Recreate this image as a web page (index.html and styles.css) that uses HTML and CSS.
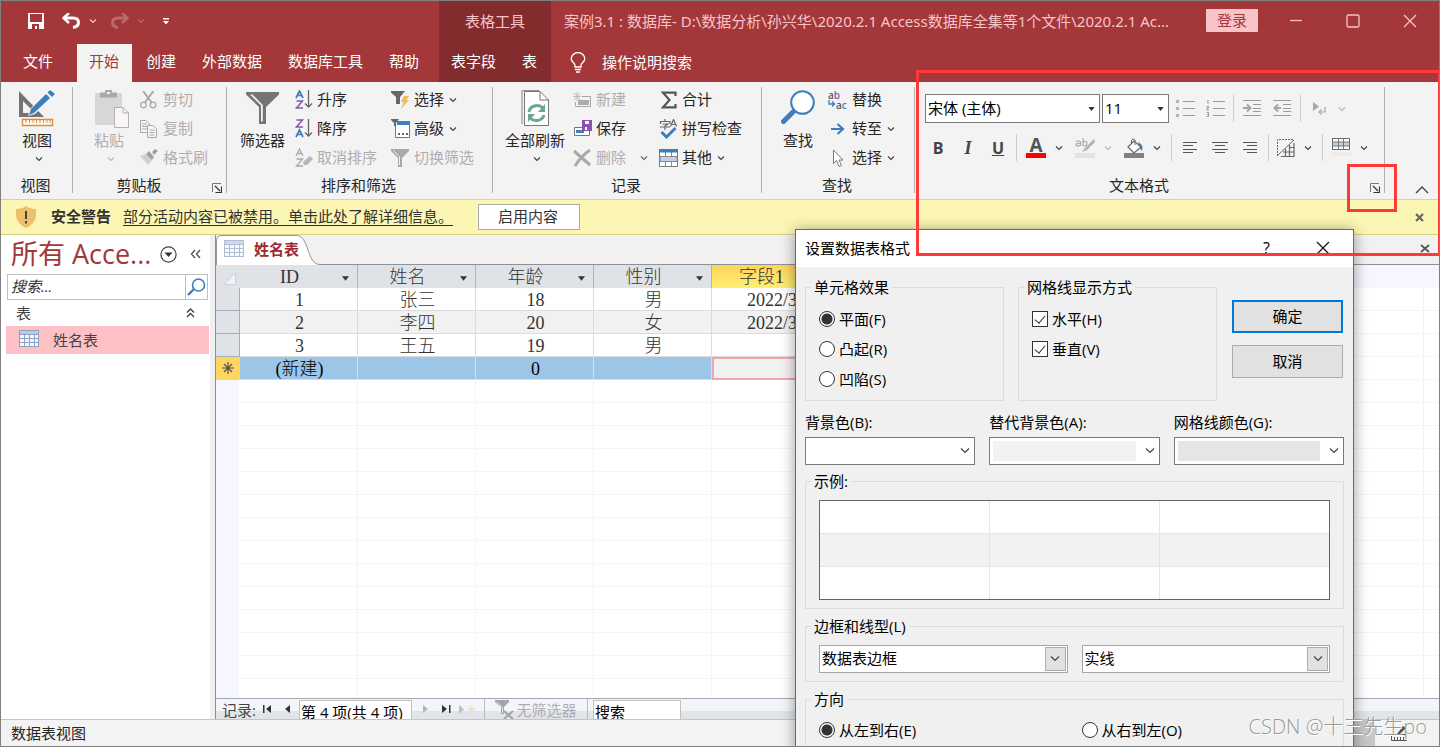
FILE: index.html
```html
<!DOCTYPE html>
<html lang="zh-CN">
<head>
<meta charset="utf-8">
<title>案例3.1 : 数据库</title>
<link rel="stylesheet" href="styles.css">
</head>
<body>
<svg class="defs" aria-hidden="true">
  <symbol id="chev" viewBox="0 0 8 6"><path d="M1 1.500L4 4.500L7 1.500" fill="none" stroke="currentColor" stroke-width="1.200"/></symbol>
  <symbol id="launch" viewBox="0 0 10 10"><path d="M0.500 9V0.500H9" fill="none" stroke="#777"/><path d="M3 3L8 8M9.500 3.500V9.500H3.500" fill="none" stroke="#333" stroke-width="1.200"/></symbol>
  <symbol id="down" viewBox="0 0 10 8"><path d="M1 1.500L5 5.500L9 1.500" fill="none" stroke="#444" stroke-width="1.200"/></symbol>
  <symbol id="sheet" viewBox="0 0 20 17"><path d="M0 0H20V17H0Z" fill="#8ea2c4"/><path d="M1 1H19V4H1Z" fill="#b9cbe6"/><path d="M1 5H5V8H1ZM6 5H10V8H6ZM11 5H15V8H11ZM16 5H19V8H16ZM1 9H5V12H1ZM6 9H10V12H6ZM11 9H15V12H11ZM16 9H19V12H16ZM1 13H5V16H1ZM6 13H10V16H6ZM11 13H15V16H11ZM16 13H19V16H16Z" fill="#f3f7fd"/></symbol>
  <symbol id="tri" viewBox="0 0 8 5"><path d="M0 0H8L4 5Z" fill="#333"/></symbol>
</svg>

<div class="app">
  <header class="head">
    <div class="head-left">
      <div class="qat">
        <button class="save" aria-label="保存"><svg width="16" height="16"><path fill-rule="evenodd" fill="#fff" d="M0 0H16V16H0ZM2 1V9H14V1ZM4 11V16H7V13H9V16H11V11Z"/></svg></button>
        <button class="undo" aria-label="撤消"><svg width="19" height="16"><path d="M2 5H11C15 5 16.500 7 16.500 9.500S14.500 14 11 14.500" fill="none" stroke="#fff" stroke-width="3"/><path d="M7 0L1.500 5L7 10" fill="none" stroke="#fff" stroke-width="2.500"/></svg><svg class="c pinkc" width="8" height="6"><use href="#chev"/></svg></button>
        <button class="redo" aria-label="恢复"><svg width="19" height="16"><path d="M17 5H8C4 5 2.500 7 2.500 9.500S4.500 14 8 14.500" fill="none" stroke="#bd6a6d" stroke-width="3"/><path d="M12 0L17.500 5L12 10" fill="none" stroke="#bd6a6d" stroke-width="2.500"/></svg><svg class="c dimc" width="8" height="6"><use href="#chev"/></svg></button>
        <button class="cust" aria-label="自定义"><svg width="6" height="7"><path d="M0 0H6V1.400H0ZM0 3H6L3 6.500Z" fill="#fff"/></svg></button>
      </div>
      <nav class="tabs">
        <button class="tab file">文件</button><button class="tab active">开始</button><button class="tab">创建</button><button class="tab">外部数据</button><button class="tab">数据库工具</button><button class="tab">帮助</button>
      </nav>
    </div>
    <div class="head-ctx">
      <div class="ctx-title">表格工具</div>
      <nav class="ctx-tabs"><button>表字段</button><button>表</button></nav>
    </div>
    <div class="head-right">
      <div class="titlebar">
        <div class="title">案例3.1 : 数据库- D:\数据分析\孙兴华\2020.2.1 Access数据库全集等1个文件\2020.2.1 Ac...</div>
        <button class="login">登录</button>
        <button class="win" aria-label="最小化"><svg width="14" height="14"><path d="M1 6.500H13" stroke="#f8c4c8" stroke-width="1.300"/></svg></button>
        <button class="win" aria-label="最大化"><svg width="14" height="14"><rect x="1" y="1" width="12" height="12" rx="1.500" fill="none" stroke="#f8c4c8" stroke-width="1.300"/></svg></button>
        <button class="win" aria-label="关闭"><svg width="14" height="14"><path d="M1 1L13 13M13 1L1 13" stroke="#f8c4c8" stroke-width="1.300"/></svg></button>
      </div>
      <button class="tell"><svg width="16" height="21" fill="none" stroke="#fff" stroke-width="1.400"><path d="M5 15V13.500C5 11 1.200 10 1.200 6.800A6.800 6.200 0 0 1 14.800 6.800C14.800 10 11 11 11 13.500V15ZM5 17.500H11M6 20H10"/></svg>操作说明搜索</button>
    </div>
  </header>

  <div class="ribbon">
    <section class="group g1">
      <div class="gbody">
        <button class="big"><svg width="36" height="36"><path fill-rule="evenodd" fill="#737373" d="M0 1L25 27H0ZM4 11V23H10L13 20Z"/><path d="M9 26L11 19L29 1L35 6L16 24Z" fill="#f3f3f3"/><path d="M10 25L12 19L27 4L31 8L15 23Z" fill="#3f7ebd"/><path d="M28.500 2.500L31 0L36 4L33 7Z" fill="#3f7ebd"/><path d="M3.500 29.500H33.500V35.500H3.500Z" fill="#fff" stroke="#e08a3c" stroke-width="1.400"/><path d="M7 30V33M10.500 30V33M14 30V33M17.500 30V33M21 30V33M24.500 30V33M28 30V33M31 30V33" stroke="#e08a3c"/></svg><span>视图</span><svg class="c" width="8" height="6"><use href="#chev"/></svg></button>
      </div>
      <div class="glabel"><span>视图</span></div>
    </section>
    <section class="group g2">
      <div class="gbody">
        <button class="big" disabled><svg width="34" height="38"><path d="M0 3H27V35H0Z" fill="#d9d6d9"/><path d="M5 2.500H10V0H17V2.500H22V7.500H5Z" fill="#a9a9a9"/><path d="M12 2H15V4H12Z" fill="#f3f3f3"/><path d="M19.500 17.500H28L33.500 23V37.500H19.500Z" fill="#f8f5f8" stroke="#b3afb3"/><path d="M28 17.500V23H33.500" fill="none" stroke="#b3afb3"/></svg><span>粘贴</span><svg class="c" width="8" height="6"><use href="#chev"/></svg></button>
        <div class="col">
          <button class="small" disabled><i><svg width="17" height="18" fill="none" stroke="#a9a9a9"><path d="M3 0L12 12M13.500 0L4.500 12" stroke-width="2"/><circle cx="3.500" cy="14" r="2.800" stroke-width="1.300"/><circle cx="13" cy="14" r="2.800" stroke-width="1.300"/></svg></i><span>剪切</span></button>
          <button class="small" disabled><i><svg width="18" height="18" fill="#f6f4f6" stroke="#a9a9a9"><path d="M0.500 0.500H6L9.500 4V12.500H0.500ZM2 4H7M2 6.500H7M2 9H7"/><path d="M7.500 5.500H13L16.500 9V17.500H7.500ZM9.500 10H14.500M9.500 12.500H14.500M9.500 15H14.500"/></svg></i><span>复制</span></button>
          <button class="small" disabled><i><svg width="18" height="17"><path d="M0 7L6 5L12 11L8 16Z" fill="#d2ced2"/><path d="M6 5L9 2L14 8L12 11ZM12 3L15 0L18 2L14 6Z" fill="#a0a0a0"/></svg></i><span>格式刷</span></button>
        </div>
      </div>
      <div class="glabel"><span>剪贴板</span><button class="launcher" aria-label="剪贴板选项"><svg width="10" height="10"><use href="#launch"/></svg></button></div>
    </section>
    <section class="group g3">
      <div class="gbody">
        <button class="big"><svg width="33" height="32"><path d="M0 0H33V2.500L20 15V32H13V15L0 2.500Z" fill="#757575"/><path d="M4 2.500L15 13.500V29.500H16.800V13L6.500 2.500Z" fill="#f3f3f3"/></svg><span>筛选器</span></button>
        <div class="col sort">
          <button class="small"><i><svg width="18" height="19"><path d="M1 8L4.500 1L8 8M2.500 5.500H6.500" fill="none" stroke="#3f7ebd" stroke-width="1.700"/><path d="M1.500 11H7.500L1.500 18H8" fill="none" stroke="#8a54ad" stroke-width="1.500"/><path d="M13.500 0V17M10 13.500L13.500 17L17 13.500" fill="none" stroke="#666" stroke-width="1.300"/></svg></i><span>升序</span></button>
          <button class="small"><i><svg width="18" height="19"><path d="M1.500 1H7.500L1.500 8H8" fill="none" stroke="#8a54ad" stroke-width="1.500"/><path d="M1 18L4.500 11L8 18M2.500 15.500H6.500" fill="none" stroke="#3f7ebd" stroke-width="1.700"/><path d="M13.500 0V17M10 13.500L13.500 17L17 13.500" fill="none" stroke="#666" stroke-width="1.300"/></svg></i><span>降序</span></button>
          <button class="small" disabled><i><svg width="18" height="19"><path d="M1 8L4.500 1L8 8M2.500 5.500H6.500M1.500 11H7.500L1.500 18H8" fill="none" stroke="#a9a9a9" stroke-width="1.300"/><path d="M8 14L15 8L18 11L12 17H9Z" fill="#b5b5b5"/></svg></i><span>取消排序</span></button>
        </div>
        <div class="col">
          <button class="small"><i><svg width="19" height="18"><path d="M0 0H14L9 6V13H5V6L0 1.500Z" fill="#666"/><path d="M13 5H18L15.500 9H18L10 18L12.500 11H10Z" fill="#edbd62"/></svg></i><span>选择</span><svg class="c" width="8" height="6"><use href="#chev"/></svg></button>
          <button class="small"><i><svg width="20" height="19"><path d="M4.500 2.500H18.500V18.500H4.500Z" fill="#fff" stroke="#777"/><path d="M6 2H19V6H6Z" fill="#3f7ebd"/><path d="M0 0H8L5 4V7H3V4L0 1Z" fill="#666"/><path d="M7 14H9V16H7ZM11 14H13V16H11ZM15 14H17V16H15Z" fill="#666"/></svg></i><span>高级</span><svg class="c" width="8" height="6"><use href="#chev"/></svg></button>
          <button class="small" disabled><i><svg width="19" height="18"><path d="M0 0H18V2L11 9V18H7V9L0 2Z" fill="#a9a9a9"/><path d="M2.500 1.500L8.500 8V16" fill="none" stroke="#f3f3f3"/></svg></i><span>切换筛选</span></button>
        </div>
      </div>
      <div class="glabel"><span>排序和筛选</span></div>
    </section>
    <section class="group g4">
      <div class="gbody">
        <button class="big"><svg width="28" height="36"><path d="M1 34V0.600H18" fill="none" stroke="#888"/><path d="M3.500 1.500H19L27.500 10V35.500H3.500Z" fill="#fff" stroke="#777"/><path d="M19 1.500V10H27.500" fill="none" stroke="#777"/><g fill="none" stroke="#6aa792" stroke-width="3"><path d="M8 22A8 7 0 0 1 22 18M23 25A8 7 0 0 1 9 28"/></g><path d="M24 14V22H17ZM7 32V24H14Z" fill="#6aa792"/></svg><span>全部刷新</span><svg class="c" width="8" height="6"><use href="#chev"/></svg></button>
        <div class="col wide">
          <button class="small" disabled><i><svg width="18" height="16"><path d="M4 0V9M0 4.500H8M1 1L7 8M7 1L1 8" stroke="#bbb"/><path d="M9 4.500H17.500V14.500H2.500V10" fill="none" stroke="#a9a9a9"/><path d="M5 8H16V13H5Z" fill="#b0a9b0"/></svg></i><span>新建</span></button>
          <button class="small"><i><svg width="20" height="17"><path d="M1.500 7.500H16.500V15.500H1.500Z" fill="#fff" stroke="#777"/><path d="M3 10H11V13H3Z" fill="#3f7ebd"/><path d="M9 0H19V11H9Z" fill="#8a54ad"/><path d="M12 1H16V4H12ZM12 7H14V10H12Z" fill="#fff"/></svg></i><span>保存</span></button>
          <button class="small del" disabled><i><svg width="19" height="18"><path d="M1 2L17 16M17 1Q8 7 2 17" fill="none" stroke="#a9a9a9" stroke-width="3"/></svg></i><span>删除</span><svg class="c" width="8" height="6"><use href="#chev"/></svg></button>
        </div>
        <div class="col">
          <button class="small"><i><svg width="19" height="18"><path d="M16.500 5V1.700H4L10.500 9L4 16.300H16.500V13" fill="none" stroke="#555" stroke-width="2.200"/></svg></i><span>合计</span></button>
          <button class="small"><i><svg width="19" height="20"><path d="M6 0V2M1.500 5V2.500H11V5M3.500 5H9L6 7V11M1 8H11M11.500 7.500L14.500 0.500L17.500 7.500M12.500 5.500H16.500" fill="none" stroke="#666" stroke-width="1.200"/><path d="M2.500 13L7.500 18L16.500 9" fill="none" stroke="#3f7ebd" stroke-width="3"/></svg></i><span>拼写检查</span></button>
          <button class="small"><i><svg width="19" height="18"><path d="M0.500 0.500H18.500V17.500H0.500Z" fill="#fff" stroke="#777"/><path d="M6.500 3V18M12.500 3V18" stroke="#888"/><path d="M0 0H19V3.500H0Z" fill="#3f7ebd"/><path d="M1 7.500H18V12.500H1Z" fill="#bcd1ea" stroke="#888"/></svg></i><span>其他</span><svg class="c" width="8" height="6"><use href="#chev"/></svg></button>
        </div>
      </div>
      <div class="glabel"><span>记录</span></div>
    </section>
    <section class="group g5">
      <div class="gbody">
        <button class="big"><svg width="34" height="34"><path d="M2.500 31.500L13 21" stroke="#3f7ebd" stroke-width="5" stroke-linecap="round"/><circle cx="21.500" cy="12.500" r="11.300" fill="#fff" stroke="#3f7ebd" stroke-width="2"/></svg><span>查找</span></button>
        <div class="col">
          <button class="small"><i class="abac"><b>a<em>b</em></b><b><svg width="8" height="7"><path d="M1 0V4H6M4 1.500L6.500 4L4 6.500" fill="none" stroke="#3f7ebd" stroke-width="1.300"/></svg>a<u>c</u></b></i><span>替换</span></button>
          <button class="small"><i><svg width="20" height="12"><path d="M3 6H15M9.500 1L15 6L9.500 11" fill="none" stroke="#3f7ebd" stroke-width="2.200"/></svg></i><span>转至</span><svg class="c" width="8" height="6"><use href="#chev"/></svg></button>
          <button class="small"><i><svg width="20" height="18"><path d="M5.500 1V14.500L8.500 11.500L11 17.500L13.500 16.500L11 11H15Z" fill="#fff" stroke="#777"/></svg></i><span>选择</span><svg class="c" width="8" height="6"><use href="#chev"/></svg></button>
        </div>
      </div>
      <div class="glabel"><span>查找</span></div>
    </section>
    <section class="group g6">
      <div class="gbody">
        <div class="frow first">
          <div class="combo font"><select aria-label="字体"><option>宋体 (主体)</option></select><svg width="7" height="4" viewBox="0 0 8 5"><use href="#tri"/></svg></div>
          <div class="combo size"><select aria-label="字号"><option>11</option></select><svg width="7" height="4" viewBox="0 0 8 5"><use href="#tri"/></svg></div>
          <button class="tool" disabled aria-label="项目符号"><svg width="19" height="17"><path d="M0 0H3V3H0ZM0 7H3V10H0ZM0 14H3V17H0Z" fill="#b5b5b5"/><path d="M7 1.500H19M7 8.500H19M7 15.500H19" stroke="#999"/></svg></button>
          <button class="tool" disabled aria-label="编号"><svg width="19" height="17"><path d="M1 0.500L2 0V4M0.500 6.500H2.500V8H1V10H3M0.500 12.500H2.500V16.500H0.500M1 14.500H2" fill="none" stroke="#999"/><path d="M7 1.500H19M7 8.500H19M7 15.500H19" stroke="#999"/></svg></button>
          <span class="vsep"></span>
          <button class="tool" disabled aria-label="增加缩进"><svg width="18" height="17"><path d="M0 0.500H18M10 4.500H18M10 8.500H18M10 11.500H18M0 15.500H18" stroke="#999"/><path d="M0 8H7M4 4.500L7.500 8L4 11.500" fill="none" stroke="#a5a5a5" stroke-width="2"/></svg></button>
          <button class="tool" disabled aria-label="减少缩进"><svg width="18" height="17"><path d="M0 0.500H18M10 4.500H18M10 8.500H18M10 11.500H18M0 15.500H18" stroke="#999"/><path d="M8 8H2M5 4.500L1.500 8L5 11.500" fill="none" stroke="#a5a5a5" stroke-width="2"/></svg></button>
          <span class="vsep"></span>
          <button class="tool" disabled aria-label="文字方向"><svg width="13" height="13"><path d="M0 0L6 4.500L0 9Z" fill="#a9a9a9"/><path d="M12 5V10H6M8.500 7.500L6 10L8.500 12.500" fill="none" stroke="#a9a9a9" stroke-width="1.200"/></svg></button>
          <button class="drop" disabled aria-label="文字方向选项"><svg class="c" width="8" height="6"><use href="#chev"/></svg></button>
        </div>
        <div class="frow">
          <button class="tool b">B</button><button class="tool it">I</button><button class="tool un">U</button>
          <span class="vsep after"></span>
          <button class="tool color" aria-label="字体颜色"><span>A</span><svg width="20" height="5"><path d="M0 0H20V5H0Z" fill="#f00"/></svg></button><button class="drop" aria-label="颜色选项"><svg class="c" width="8" height="6"><use href="#chev"/></svg></button>
          <button class="tool gap" disabled aria-label="突出显示"><svg width="20" height="20"><path d="M1 4Q4 1.500 5.500 4V8M5.500 5Q1 5 1 7Q3 9 5.500 7M8 0V8M8 4Q12 2 12 6Q11 9 8 7.500" fill="none" stroke="#aaa" stroke-width="1.200"/><path d="M19 1L10 10L7 14L12 12L20 4Z" fill="#b3b3b3"/><path d="M0 15H20V20H0Z" fill="#e6e1e8"/></svg></button><button class="drop" disabled aria-label="突出显示选项"><svg class="c" width="8" height="6"><use href="#chev"/></svg></button>
          <button class="tool gap" aria-label="背景色"><svg width="20" height="20"><path d="M14 4Q20 7 18 13Q16 11 15 8Z" fill="#3f7ebd"/><path d="M4 9L10 3L17 9L10 15Z" fill="#fff" stroke="#666" stroke-width="1.200"/><path d="M7.500 5V2Q9 0 11 2V7" fill="none" stroke="#666"/><path d="M0 15H20V20H0Z" fill="#808080"/></svg></button><button class="drop" aria-label="背景色选项"><svg class="c" width="8" height="6"><use href="#chev"/></svg></button>
          <span class="vsep before"></span>
          <button class="tool" aria-label="左对齐"><svg width="14" height="11"><path d="M0 0.500H14M0 3.500H10M0 7.500H14M0 10.500H10" stroke="#555"/></svg></button>
          <button class="tool" aria-label="居中"><svg width="16" height="11"><path d="M0 0.500H16M3 3.500H13M0 7.500H16M3 10.500H13" stroke="#555"/></svg></button>
          <button class="tool" aria-label="右对齐"><svg width="14" height="11"><path d="M0 0.500H14M4 3.500H14M0 7.500H14M4 10.500H14" stroke="#555"/></svg></button>
          <span class="vsep"></span>
          <button class="tool narrow" aria-label="网格线"><svg width="18" height="18"><path d="M0.500 17V0.500H17" fill="none" stroke="#666" stroke-dasharray="2 1"/><path d="M0 17L17 1" stroke="#666"/><path d="M17 4V17.500H4M8.500 10V17M12.500 6V17M12 8.500H17M6 13H17" fill="none" stroke="#666" stroke-width="1.200"/></svg></button><button class="drop" aria-label="网格线选项"><svg class="c" width="8" height="6"><use href="#chev"/></svg></button>
          <span class="vsep before"></span>
          <button class="tool" aria-label="可选行颜色"><svg width="20" height="19"><path d="M1.500 0.500H18.500V11.500H1.500Z" fill="#fff" stroke="#666"/><path d="M2 4H18V8H2Z" fill="#bcd1ea"/><path d="M7.500 0V12M12.500 0V12M1 4H18M1 8H18" stroke="#777"/><path d="M0 14H20V18H0Z" fill="#ececec"/></svg></button><button class="drop" aria-label="可选行颜色选项"><svg class="c" width="8" height="6"><use href="#chev"/></svg></button>
        </div>
      </div>
      <div class="glabel"><span>文本格式</span><button class="launcher" aria-label="设置数据表格式"><svg width="10" height="10"><use href="#launch"/></svg></button></div>
    </section>
    <button class="collapse" aria-label="折叠功能区"><svg width="14" height="8"><path d="M1 7L7 1L13 7" fill="none" stroke="#444" stroke-width="1.400"/></svg></button>
  </div>

  <div class="warn">
    <svg width="20" height="22"><path d="M10 0Q14 3 20 3V10Q19 18 10 22Q1 18 0 10V3Q6 3 10 0Z" fill="#ecc06c"/><path d="M10 5V13M10 15V17.500" stroke="#444" stroke-width="2"/></svg>
    <strong>安全警告</strong>
    <a href="#">部分活动内容已被禁用。单击此处了解详细信息。</a>
    <button class="enable">启用内容</button>
    <button class="wclose" aria-label="关闭"><svg width="9" height="9"><path d="M1 1L8 8M8 1L1 8" stroke="#666" stroke-width="2.200"/></svg></button>
  </div>

  <div class="main">
    <aside class="nav">
      <div class="nav-title"><h1>所有 Acce...</h1>
        <button aria-label="菜单"><svg width="17" height="17"><circle cx="8.500" cy="8.500" r="7.600" fill="none" stroke="#444" stroke-width="1.200"/><path d="M4.500 6.500H12.500L8.500 11Z" fill="#333"/></svg></button>
        <button aria-label="折叠"><svg width="11" height="10"><path d="M5 1L1.500 5L5 9M10 1L6.500 5L10 9" fill="none" stroke="#555" stroke-width="1.400"/></svg></button>
      </div>
      <div class="nav-search"><input type="text" placeholder="搜索..." aria-label="搜索"><button aria-label="搜索"><svg width="19" height="18"><circle cx="11.500" cy="7" r="6" fill="none" stroke="#3f7ebd" stroke-width="1.600"/><path d="M7 11L1 17" stroke="#3f7ebd" stroke-width="2.400"/></svg></button></div>
      <div class="nav-group"><span>表</span><svg width="9" height="10"><path d="M1 4.500L4.500 1L8 4.500M1 9L4.500 5.500L8 9" fill="none" stroke="#444" stroke-width="1.400"/></svg></div>
      <button class="nav-item"><svg width="20" height="17"><use href="#sheet"/></svg>姓名表</button>
    </aside>
    <section class="doc">
      <div class="doctabs">
        <svg class="tabshape" width="104" height="30"><path d="M0.500 30V6Q0.500 0.500 6 0.500H80C94 0.500 90 29.500 104 29.500V30Z" fill="#fff"/><path d="M0.500 30V6Q0.500 0.500 6 0.500H80C94 0.500 90 29.500 104 29.500" fill="none" stroke="#9a948e"/></svg>
        <button class="doctab"><svg width="20" height="17" opacity=".7"><use href="#sheet"/></svg>姓名表</button>
        <button class="dclose" aria-label="关闭表"><svg width="10" height="9"><path d="M1 1L9 8M9 1L1 8" stroke="#555" stroke-width="1.700"/></svg></button>
      </div>
      <div class="sheet">
        <table>
          <colgroup><col class="sel"><col class="fld"><col class="fld"><col class="fld"><col class="fld"><col class="fld"></colgroup>
          <thead><tr>
            <th class="corner"><svg width="12" height="12"><path d="M11.500 0V11.500H0Z" fill="#f0f4f8" stroke="#c8d2dc"/></svg></th>
            <th>ID<svg width="7" height="5"><use href="#tri"/></svg></th><th>姓名<svg width="7" height="5"><use href="#tri"/></svg></th><th>年龄<svg width="7" height="5"><use href="#tri"/></svg></th><th>性别<svg width="7" height="5"><use href="#tri"/></svg></th><th class="hot">字段1</th>
          </tr></thead>
          <tbody>
            <tr><th></th><td>1</td><td>张三</td><td>18</td><td>男</td><td class="date">2022/3/1</td></tr>
            <tr class="alt"><th></th><td>2</td><td>李四</td><td>20</td><td>女</td><td class="date">2022/3/1</td></tr>
            <tr><th></th><td>3</td><td>王五</td><td>19</td><td>男</td><td></td></tr>
            <tr class="new"><th><svg width="12" height="12"><path d="M6 0V12M0 6H12M2 2L10 10M10 2L2 10" stroke="#555" stroke-width="1.200"/></svg></th><td>(新建)</td><td></td><td>0</td><td></td><td class="cur"></td></tr>
          </tbody>
        </table>
      </div>
      <div class="recnav">
        <span class="rl">记录:</span>
        <button aria-label="首记录"><svg width="9" height="8"><path d="M0 0H1.500V8H0ZM8 0V8L3 4Z" fill="#333"/></svg></button>
        <button aria-label="上一记录"><svg width="6" height="8"><path d="M5 0V8L0 4Z" fill="#333"/></svg></button>
        <input class="pos" type="text" value="第 4 项(共 4 项)" aria-label="当前记录">
        <button aria-label="下一记录" disabled><svg width="6" height="8"><path d="M0 0V8L5 4Z" fill="#b5b5b8"/></svg></button>
        <button aria-label="尾记录"><svg width="9" height="8"><path d="M0 0V8L5 4ZM7 0H8.500V8H7Z" fill="#333"/></svg></button>
        <button class="nr" aria-label="新记录" disabled><svg width="17" height="9"><path d="M0 0V9L5 4.500Z" fill="#c0c0c4"/><path d="M12 0V9M8 4.500H16M9 1.500L15 7.500M15 1.500L9 7.500" stroke="#eddcc0"/></svg></button>
        <button class="nofilter" disabled><svg width="19" height="20"><path d="M0 0H14V2L9 7V14H6V7L0 2Z" fill="#a5a5a9"/><path d="M2 2L7.500 7.500V13" fill="none" stroke="#e6e8ec"/><path d="M9 11L18 19M18 11L9 19" stroke="#a5a5a9" stroke-width="2"/></svg>无筛选器</button>
        <input class="find" type="text" value="搜索" aria-label="搜索记录">
      </div>
    </section>
  </div>

  <footer class="status"><span>数据表视图</span><span class="views"><button class="on" aria-label="数据表视图"></button><button aria-label="设计视图"><svg width="18" height="16"><path d="M1.500 9.500H16.500V15.500H1.500ZM4.500 12V15M7.500 12V15M10.500 12V15M13.500 12V15" fill="none" stroke="#555"/><path d="M7 9L13 1L16 3L10 9Z" fill="#555"/></svg></button></span></footer>

  <form class="dialog">
    <div class="dtitle"><h2>设置数据表格式</h2><button type="button" class="help">?</button><button type="button" class="x" aria-label="关闭"><svg width="14" height="14"><path d="M1 1L13 13M13 1L1 13" stroke="#111" stroke-width="1.200"/></svg></button></div>
    <div class="dbody">
      <div class="drow top">
        <fieldset class="half"><legend>单元格效果</legend>
          <label><input type="radio" name="fx" checked>平面(F)</label>
          <label><input type="radio" name="fx">凸起(R)</label>
          <label><input type="radio" name="fx">凹陷(S)</label>
        </fieldset>
        <fieldset class="half"><legend>网格线显示方式</legend>
          <label><input type="checkbox" checked>水平(H)</label>
          <label><input type="checkbox" checked>垂直(V)</label>
        </fieldset>
        <div class="acts"><button type="button" class="ok">确定</button><button type="button">取消</button></div>
      </div>
      <div class="colors">
        <div><label for="bg">背景色(B):</label><div class="combo dc"><select id="bg"><option></option></select><svg width="10" height="8"><use href="#down"/></svg></div></div>
        <div><label for="alt">替代背景色(A):</label><div class="combo dc"><select id="alt"><option></option></select><span class="sw light"></span><svg width="10" height="8"><use href="#down"/></svg></div></div>
        <div><label for="grid">网格线颜色(G):</label><div class="combo dc"><select id="grid"><option></option></select><span class="sw dark"></span><svg width="10" height="8"><use href="#down"/></svg></div></div>
      </div>
      <fieldset class="sample"><legend>示例:</legend>
        <div class="preview"><i></i><i></i><i></i><i></i><i></i><i></i><i></i><i></i><i></i></div>
      </fieldset>
      <fieldset class="border"><legend>边框和线型(L)</legend>
        <div class="two">
          <div class="combo ds"><select aria-label="边框"><option>数据表边框</option></select><span class="btn"><svg width="10" height="8"><use href="#down"/></svg></span></div>
          <div class="combo ds"><select aria-label="线型"><option>实线</option></select><span class="btn"><svg width="10" height="8"><use href="#down"/></svg></span></div>
        </div>
      </fieldset>
      <fieldset class="dir"><legend>方向</legend>
        <div class="two"><label><input type="radio" name="dir" checked>从左到右(E)</label><label><input type="radio" name="dir">从右到左(O)</label></div>
      </fieldset>
    </div>
  </form>

  <div class="mark area"></div>
  <div class="mark spot"></div>
  <div class="watermark">CSDN @十三先生po</div>
</div>
</body>
</html>
```
FILE: styles.css
```css
* { box-sizing: border-box; }
body {
  margin: 0;
  font: 15px/20px "Open Sans", "Noto Sans CJK SC", sans-serif;
  color: #262626;
}
button, input, select { font: inherit; color: inherit; margin: 0; }
button { background: none; border: 0; padding: 0; display: flex; align-items: center; justify-content: center; white-space: nowrap; }
svg { display: block; flex: none; }
.defs { position: absolute; width: 0; height: 0; }
i, em { font-style: normal; }
.c { color: #444; }

.app {
  position: relative;
  display: flex;
  flex-direction: column;
  height: 100vh;
  border: 1px solid #808080;
  overflow: hidden;
  background: #f3f3f3;
}

/* title bar and tabs */
.head { display: flex; background: #a4373a; color: #fff; flex: none; }
.head-left { width: 438px; }
.qat { height: 43px; display: flex; align-items: center; padding: 0 0 3px 27px; }
.undo, .redo { gap: 8px; }
.undo { margin-left: 18px; }
.redo { margin-left: 13px; }
.cust { margin-left: 18px; }
.pinkc { color: #f3c5c8; }
.dimc { color: #bd6a6d; }
.tabs { display: flex; height: 38px; }
.tab { padding: 0 13px 4px; }
.tab.file { padding: 0 24px 4px 22px; }
.tab.active { padding: 0 13px 4px 12px; margin-right: 1px; background: #f3f3f3; color: #a4373a; }
.head-ctx { width: 112px; background: #832c2e; }
.ctx-title { height: 43px; line-height: 40px; text-align: center; color: #f8c4c8; }
.ctx-tabs { height: 38px; display: flex; padding: 0 0 4px 12px; gap: 26px; }
.head-right { flex: 1; min-width: 0; padding-right: 1px; }
.titlebar { height: 43px; display: flex; align-items: center; padding-bottom: 4px; }
.title { flex: 1; min-width: 0; padding-left: 13px; font-family: "Noto Sans", "Noto Sans CJK SC", sans-serif; color: #f8c4c8; white-space: nowrap; overflow: hidden; text-overflow: ellipsis; }
.login { width: 52px; height: 23px; margin: 0 9px 0 20px; padding-bottom: 2px; border-radius: 1px; background: #f8c4c8; color: #a4373a; }
.win { width: 57px; height: 40px; }
.tell { height: 38px; padding: 0 0 2px 19px; gap: 16px; }

/* ribbon */
.ribbon { display: flex; flex: none; height: 118px; padding-top: 3px; border-bottom: 1px solid #cfcfcf; }
.group { display: flex; flex-direction: column; position: relative; flex: none; }
.group::after { content: ""; position: absolute; right: 0; top: 2px; bottom: 6px; width: 1px; background: #b0b0b0; }
.g1 { width: 72px; }
.g2 { width: 154px; }
.g3 { width: 266px; }
.g4 { width: 269px; }
.g5 { width: 153px; }
.g6 { width: 470px; }
.gbody { display: flex; height: 87px; }
.glabel { display: flex; align-items: center; justify-content: center; height: 27px; padding: 0 3px 1px 0; position: relative; }
.g2 .glabel, .g6 .glabel { padding-right: 22px; }
.launcher { position: absolute; right: 5px; bottom: 6px; }
.big { flex-direction: column; justify-content: flex-start; height: 87px; }
.big > svg:first-child { margin-top: 5px; height: 38px; }
.big > span { margin-top: 2px; }
.big > .c { margin: 6px 0 0 4px; }
.g1 .big { width: 72px; }
.g2 .gbody { padding-left: 12px; gap: 7px; }
.g2 .big { width: 48px; }
.g2 .big > svg:first-child { margin-left: 6px; }
.g3 .gbody { padding-left: 8px; }
.g3 .big { width: 55px; margin-right: 5px; }
.g3 .big > svg:first-child { margin-top: 7px; height: 36px; }
.sort { width: 96px; }
.g4 .gbody { padding-left: 10px; }
.g4 .big { width: 64px; margin-right: 6px; }
.wide { width: 86px; }
.g5 .gbody { padding-left: 12px; gap: 6px; }
.g5 .big { width: 48px; }
.small { height: 29px; justify-content: flex-start; }
.small span { margin-top: -2px; }
.small i { width: 19px; margin-right: 4px; flex: none; }
.g3 .sort i { width: 18px; }
.g5 .small i { width: 20px; }
.small .c { margin-left: 5px; }
.del .c { margin-left: 14px; }
button:disabled { color: #b0adb0; }
button:disabled .c { color: #b8b8b8; }
.del:disabled .c { color: #666; }
.small i.abac b { display: flex; font-weight: 600; font-size: 10px; line-height: 10px; color: #555; }
.small i.abac em { color: #8a54ad; }
.small i.abac u { color: #3f7ebd; text-decoration: none; }
.g6 .gbody { flex-direction: column; padding: 4px 0 0 8px; }
.frow { display: flex; align-items: center; height: 39px; }
.frow.first { padding-left: 2px; }
.combo { position: relative; }
.combo select { appearance: none; width: 100%; height: 100%; border: 1px solid #7a7a7a; border-radius: 0; background: #fff; padding: 0 2px 2px; color: #000; }
.combo > svg { position: absolute; right: 5px; top: 50%; transform: translateY(-50%); pointer-events: none; }
.font { width: 175px; height: 29px; margin-right: 2px; }
.size { width: 67px; height: 29px; margin-right: 1px; }
.tool { width: 30px; height: 30px; flex: none; }
.tool.narrow { width: 28px; }
.tool.gap { margin-left: 3px; }
.drop { width: 16px; height: 30px; }
.vsep { width: 1px; height: 27px; margin: 0 3px; background: #cdcdcd; }
.vsep.after { margin-right: 4px; }
.vsep.before { margin-left: 6px; }
.b, .it, .un { color: #444; font-weight: 700; font-size: 16px; }
.it { font-family: "Liberation Serif", serif; font-style: italic; font-size: 18px; }
.un { text-decoration: underline; }
.color { flex-direction: column; font-weight: 700; font-size: 19px; line-height: 16px; color: #555; }
.collapse { flex: 1; align-items: flex-end; padding: 0 0 5px 19px; }

/* security bar */
.warn { display: flex; align-items: center; flex: none; height: 35px; padding: 0 15px 0 15px; background: #fcf6b4; border-bottom: 1px solid #d5d284; color: #333; }
.warn strong { margin: -2px 12px 0 15px; }
.warn a { margin-top: -2px; color: #333; text-underline-offset: 3px; }
.enable { width: 102px; height: 26px; margin-left: 25px; padding: 0 2px 2px 0; background: #fff; border: 1px solid #ababab; }
.wclose { margin-left: auto; }

/* navigation pane */
.main { display: flex; flex: 1; min-height: 0; background: #fff; }
.nav { width: 215px; flex: none; border-right: 1px solid #8c8f96; padding: 0 6px 0 5px; box-shadow: inset -5px 0 #f0f0f3; }
.nav-title { display: flex; align-items: center; height: 38px; padding: 0 8px 0 5px; gap: 13px; }
.nav-title h1 { flex: 1; margin: 0 -10px 0 0; font-weight: 400; font-size: 27px; line-height: 36px; color: #a4373a; white-space: nowrap; }
.nav-search { display: flex; height: 26px; margin: 1px 1px 0; border: 1px solid #c0c0c0; }
.nav-search input { flex: 1; min-width: 0; border: 0; border-right: 1px solid #c0c0c0; padding: 0 3px 2px; font-style: italic; }
.nav-search input::placeholder { color: #333; }
.nav-search button { width: 21px; }
.nav-group { display: flex; align-items: center; justify-content: space-between; height: 26px; padding: 0 14px 0 10px; color: #444; }
.nav-item { width: 100%; height: 28px; justify-content: flex-start; gap: 14px; padding-left: 13px; background: #fdc1c5; color: #444; }
.nav-item svg { margin-top: -3px; }

/* datasheet */
.doc { flex: 1; min-width: 0; display: flex; flex-direction: column; }
.doctabs { position: relative; display: flex; align-items: center; flex: none; height: 30px; background: #f2f1ef; border-bottom: 1px solid #8a929c; padding: 0 9px 2px 8px; }
.tabshape { position: absolute; left: 0; top: 0; }
.doctab { position: relative; gap: 10px; font-weight: 700; color: #9c2a30; }
.dclose { margin-left: auto; }
.sheet {
  flex: 1;
  min-height: 0;
  background:
    linear-gradient(#f6f7fe, #f6f7fe) 0 0 / 100% 23px no-repeat,
    linear-gradient(#f6f7fe, #f6f7fe) 0 0 / 23px 100% no-repeat,
    linear-gradient(#f2f2f6, #f2f2f6) right 15px top 0 / 1px 100% no-repeat,
    repeating-linear-gradient(to bottom, transparent 0 22px, #f5f5f8 22px 23px),
    repeating-linear-gradient(to right, transparent 0 117px, #f4f4f7 117px 118px) 24px 0 / 944px 100% no-repeat,
    #fff;
}
table { border-collapse: separate; border-spacing: 0; table-layout: fixed; width: 614px; font: 300 18px/20px "Liberation Serif", "Noto Sans CJK SC", serif; color: #333; }
.sel { width: 24px; }
.fld { width: 118px; }
th, td { height: 23px; padding: 2px 0 0; text-align: center; font-weight: 300; border-right: 1px solid #dcdcdc; border-bottom: 1px solid #dcdcdc; background: #fff; position: relative; overflow: hidden; white-space: nowrap; }
thead th { background: #dfe3e8; border-right-color: #aab4be; border-bottom-color: #dfe3e8; padding-right: 18px; }
thead th svg { position: absolute; right: 8px; top: 11px; }
thead .corner { border-right-color: #dfe3e8; padding: 0; }
thead .corner svg { right: 3px; top: 8px; }
thead .hot { background: linear-gradient(#ffd35c, #ffee72); border-bottom-color: #ffee72; }
tbody td { padding: 2px 0 0 2px; line-height: 20px; }
tbody th { padding: 0; background: #dfe3e8; border-color: #a5adb6; }
tbody th svg { margin: 0 auto; }
.alt td { background: #f1f1f1; }
.new td { background: #9bc6e8; color: #000; border-right-color: #cfe2f2; }
.new th { background: #ffd75e; border-color: #ffd75e; }
.new td.cur { padding: 0; background: #f1f1f1; border: 2px solid #f5a5a9; }
tbody td.date { text-align: left; padding-left: 35px; }

.recnav { display: flex; align-items: flex-start; flex: none; height: 21px; padding: 0 6px; border-top: 1px solid #a5a8b0; background: linear-gradient(#f4f5f8 0 60%, #e1e4e9 60%); overflow: hidden; color: #444; }
.recnav button { height: 20px; }
.rl { width: 41px; line-height: 23px; }
.recnav button + button { margin-left: 13px; }
.recnav input { height: 22px; margin-top: 1px; border: 1px solid #c0c0c0; padding: 0 1px; background: #fff; color: #000; }
.recnav .pos { width: 113px; margin: 1px 11px 0 8px; }
.recnav button.nr { margin-left: 8px; }
.recnav button.nofilter { width: 104px; margin: 0 5px 0 8px; gap: 2px; border: solid #b9bcc4; border-width: 0 1px; padding-top: 2px; }
.recnav .find { width: 88px; }

.status { display: flex; align-items: center; justify-content: space-between; flex: none; height: 27px; padding: 0 0 0 10px; border-top: 1px solid #c5c5c5; background: #f3f3f3; }
.views { display: flex; height: 100%; padding-right: 31px; gap: 15px; }
.views .on { width: 30px; background: #c8c8c8; }

/* format dialog */
.dialog { position: absolute; left: 794px; top: 228px; bottom: -8px; width: 559px; display: flex; flex-direction: column; background: #f0f0f0; border: 1px solid #6a6a6a; box-shadow: 0 2px 14px rgba(0, 0, 0, .4); color: #000; overflow: hidden; }
.dtitle { display: flex; align-items: center; flex: none; height: 37px; padding: 0 23px 2px 9px; background: #fff; }
.dtitle h2 { flex: 1; margin: 0; font-size: 15px; font-weight: 400; }
.help { font-size: 16px; margin-right: 46px; }
.dbody { padding: 10px 9px; flex: none; }
.drow { display: flex; }
fieldset { margin: 0; min-width: 0; border: 1px solid #dcdcdc; padding: 0 13px; }
legend { margin-left: -8px; padding: 0 3px; line-height: 20px; }
.top { gap: 14px; }
.half { width: 199px; height: 124px; padding-top: 7px; }
label { display: flex; align-items: center; }
fieldset label { height: 30px; gap: 4px; }
.acts { flex: 1; display: flex; flex-direction: column; gap: 12px; padding: 23px 1px 0; }
.acts button { height: 33px; padding-bottom: 2px; background: #e1e1e1; border: 1px solid #adadad; }
.acts .ok { border: 2px solid #0078d7; }
input[type=radio], input[type=checkbox] { appearance: none; width: 16px; height: 16px; border: 1px solid #333; background: #fff; flex: none; }
input[type=radio] { border-radius: 50%; }
input[type=radio]:checked { background: radial-gradient(circle, #333 0 5px, #fff 6px); }
input[type=checkbox]:checked { position: relative; }
input[type=checkbox]:checked::after { content: ""; position: absolute; left: 4px; top: 1px; width: 5px; height: 9px; border: solid #333; border-width: 0 1px 1px 0; transform: rotate(40deg); }
.colors { display: grid; grid-template-columns: repeat(3, 1fr); gap: 14px; margin: 11px 0 6px; }
.dc { height: 28px; margin-top: 5px; }
.sw { position: absolute; left: 4px; top: 4px; bottom: 4px; right: 24px; pointer-events: none; }
.light { background: #f2f2f2; }
.dark { background: #e5e5e5; }
.sample { padding-top: 9px; padding-bottom: 8px; }
.preview { display: grid; grid-template-columns: repeat(3, 1fr); grid-auto-rows: 1fr; gap: 1px; height: 100px; border: 1px solid #646464; background: #e5e5e5; }
.preview i { background: #fff; }
.preview i:nth-child(n+4):nth-child(-n+6) { background: #f1f1f1; }
.border { margin-top: 7px; padding-top: 9px; padding-bottom: 8px; }
.two { display: grid; grid-template-columns: 1fr 1fr; gap: 14px; }
.ds { height: 28px; }
.ds select { border-color: #a5a5ad; }
.btn { position: absolute; right: 2px; top: 2px; bottom: 2px; width: 21px; display: flex; align-items: center; justify-content: center; background: #e1e1e1; border: 1px solid #adadad; pointer-events: none; }
.dir { margin-top: 7px; padding-top: 6px; padding-bottom: 20px; }

/* annotations */
.mark { position: absolute; border: 3px solid #ff3838; pointer-events: none; }
.area { left: 915px; right: -2px; top: 69px; height: 186px; }
.spot { left: 1346px; top: 163px; width: 50px; height: 48px; }
.watermark { position: absolute; right: 12px; bottom: 6px; font: 300 20px/26px "Open Sans", "Noto Sans CJK SC", sans-serif; color: #999; text-shadow: 1px 1px #fff; pointer-events: none; white-space: nowrap; }
```
